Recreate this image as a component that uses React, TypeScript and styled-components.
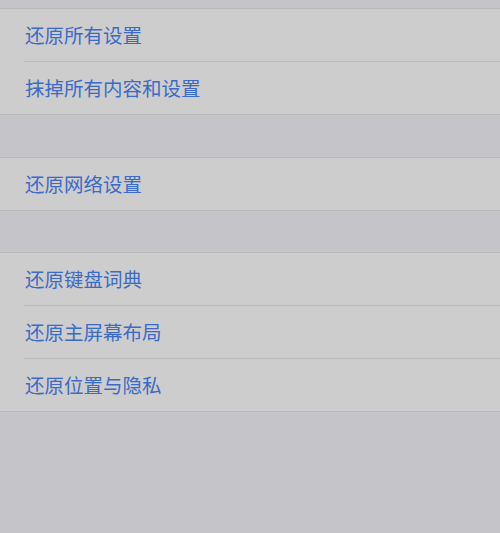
import React from "react";
import styled, { createGlobalStyle } from "styled-components";

const Global = createGlobalStyle`
  html, body { margin: 0; padding: 0; background: #c4c4c9; }
  body { font-family: "Noto Sans CJK SC", "Noto Sans", sans-serif; }
`;

const Page = styled.div`
  min-height: 533px;
  padding-top: 8px;
  background: #c4c4c9;
  display: flex;
  flex-direction: column;
`;

const Group = styled.div<{ $gap: number }>`
  margin-top: ${(p) => p.$gap}px;
  background: #cdcdcd;
  border-top: 1px solid #b9b9bc;
  border-bottom: 1px solid #b9b9bc;
`;

const Row = styled.div<{ $first?: boolean }>`
  height: 52px;
  display: flex;
  align-items: center;
  ${(p) => (p.$first ? "" : "border-top: 1px solid #bababa;")}
  margin-left: ${(p) => (p.$first ? "0" : "24px")};
  padding-left: ${(p) => (p.$first ? "25px" : "1px")};
`;

const Label = styled.span`
  font-size: 19.5px;
  color: #3b6bc4;
  line-height: 1;
`;

const groups = [
  { gap: 0, items: ["还原所有设置", "抹掉所有内容和设置"] },
  { gap: 42, items: ["还原网络设置"] },
  { gap: 41, items: ["还原键盘词典", "还原主屏幕布局", "还原位置与隐私"] },
];

export default function App() {
  return (
    <>
      <Global />
      <Page>
        {groups.map((g, i) => (
          <Group key={i} $gap={g.gap}>
            {g.items.map((t, j) => (
              <Row key={t} $first={j === 0}>
                <Label>{t}</Label>
              </Row>
            ))}
          </Group>
        ))}
      </Page>
    </>
  );
}
